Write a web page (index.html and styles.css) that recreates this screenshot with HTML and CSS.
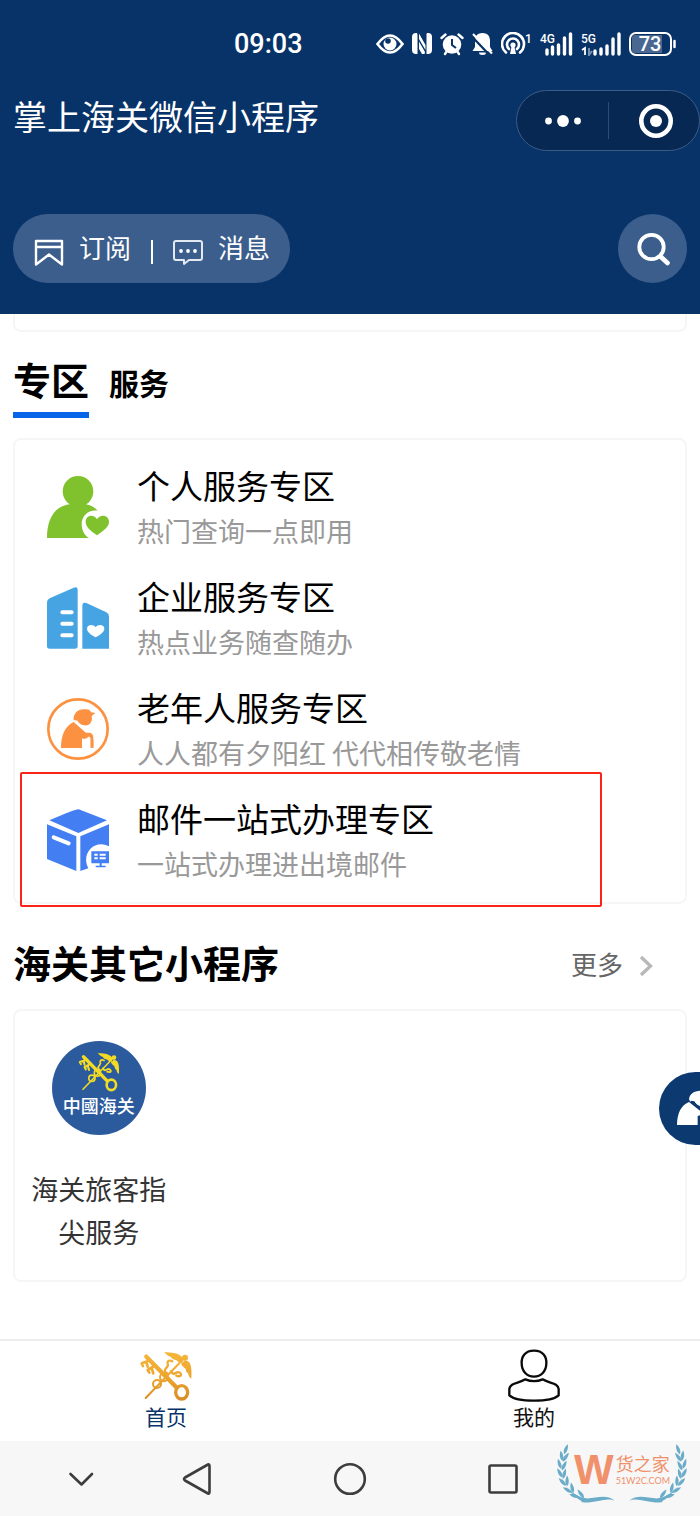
FILE: index.html
```html
<!DOCTYPE html>
<html lang="zh-CN">
<head>
<meta charset="utf-8">
<meta name="viewport" content="width=device-width, initial-scale=1">
<title>掌上海关微信小程序</title>
<link rel="stylesheet" href="styles.css">
</head>
<body>
<svg class="defs" aria-hidden="true">
  <defs>
    <linearGradient id="gold" x1="0" y1="0" x2="0" y2="160" gradientUnits="userSpaceOnUse">
      <stop offset="0" stop-color="#f6b73c"/><stop offset=".5" stop-color="#eea62e"/><stop offset="1" stop-color="#d68a24"/>
    </linearGradient>
    <symbol id="keys" viewBox="0 0 162 160">
      <g fill="none" stroke-linecap="round" stroke-linejoin="round">
        <path stroke-width="6" d="M20 146L136 26"/>
        <circle stroke-width="6" cx="54" cy="104" r="12"/>
        <circle stroke-width="6" cx="75" cy="84" r="12"/>
        <path stroke-width="7" d="M84 72C66 60 92 54 86 44C84 34 92 32 100 36M96 66C104 84 114 62 122 70C130 76 126 84 112 79"/>
        <path stroke-width="13" d="M22 22L112 114"/>
        <ellipse stroke-width="10" cx="128" cy="129" rx="18" ry="20"/>
        <path stroke-width="8" d="M30 34L8 42l4 8M22 38l4 14M46 50L26 62l5 8M38 56l5 16"/>
      </g>
      <circle class="solid" cx="138" cy="25" r="9"/>
      <path class="solid" d="M130 40C120 40 114 36 112 32C104 32 98 28 96 23C88 20 80 14 76 7C95 12 116 6 132 26ZM136 34C152 32 160 46 157 88C152 84 148 79 148 73C142 68 140 64 140 58C134 54 130 50 126 44Z"/>
    </symbol>
    <path id="leaf" d="M0 0C-8 -8 -8 -20 -2 -32C5 -20 6 -8 0 0Z"/>
    <g id="branch">
      <path d="M306 440C312 470 345 500 380 505C410 506 440 490 466 512C440 500 415 520 366 517C376 512 330 505 306 440Z"/>
      <use href="#leaf" transform="translate(314 372) rotate(24)"/>
      <use href="#leaf" transform="translate(309 392) rotate(-6)"/>
      <use href="#leaf" transform="translate(310 394) rotate(38)"/>
      <use href="#leaf" transform="translate(305 416) rotate(-14)"/>
      <use href="#leaf" transform="translate(307 420) rotate(30)"/>
      <use href="#leaf" transform="translate(309 442) rotate(-26)"/>
      <use href="#leaf" transform="translate(311 446) rotate(18)"/>
      <use href="#leaf" transform="translate(320 467) rotate(-40)"/>
      <use href="#leaf" transform="translate(323 468) rotate(4)"/>
      <use href="#leaf" transform="translate(338 488) rotate(-56)"/>
      <use href="#leaf" transform="translate(342 488) rotate(-10)"/>
      <use href="#leaf" transform="translate(360 502) rotate(-70)"/>
      <use href="#leaf" transform="translate(374 504) rotate(-34)"/>
    </g>
  </defs>
</svg>

<header class="header">
  <div class="status">
    <span class="status__time">09:03</span>
    <div class="status__icons">
      <svg width="28" height="24" viewBox="0 0 28 24"><path d="M1.500 12Q14-5 26.500 12Q14 29 1.500 12Z" fill="none" stroke="#fff" stroke-width="2.600"/><circle cx="14" cy="12" r="6.500" fill="#fff"/><circle cx="12" cy="9" r="2.800" fill="#083368"/></svg>
      <svg width="20" height="24" viewBox="0 0 20 24"><path d="M5 1L4 1Q0 1 0 5v13q0 4 4 4h1.500V3ZM7 1.500L13.500 13V18L7 7ZM7 9.500L13 20L12.500 22H10L7 17ZM15 1h1q4 0 4 4v13q0 4-4 4h-1.500V2Z" fill="#fff"/></svg>
      <svg width="24" height="24" viewBox="0 0 24 24"><circle cx="12" cy="12.500" r="9.300" fill="#fff"/><path d="M12 7v6l4 3" fill="none" stroke="#083368" stroke-width="2"/><path d="M1.500 6l4-3.500M22.500 6l-4-3.500M5 22l2-3M19 22l-2-3" stroke="#fff" stroke-width="2.400" stroke-linecap="round"/></svg>
      <svg width="21" height="24" viewBox="0 0 21 24"><path d="M10.500 1c6 0 7.500 4 7.500 8v6l2.500 4H.5L3 15V9c0-4 1.500-8 7.500-8ZM7 20.500h7a3.500 2.500 0 0 1-7 0Z" fill="#fff"/><path d="M-.5 4L18 23.500" stroke="#083368" stroke-width="2.200"/><path d="M1 2L20 21.500" stroke="#fff" stroke-width="2.200"/></svg>
      <svg width="31" height="24" viewBox="0 0 31 24"><g fill="none" stroke="#fff" stroke-width="2.600" stroke-linecap="round"><path d="M5 20.500a11 11 0 1 1 14 0"/><path d="M8 17a6 6 0 1 1 8 0"/></g><circle cx="12" cy="13" r="2.600" fill="#fff"/><path d="M10.500 15h3l1.500 7H9Z" fill="#fff"/><text class="status__tiny" x="24" y="11">1</text></svg>
      <svg width="33" height="24" viewBox="0 0 33 24"><path d="M7 22v-4M12.500 22v-7M18.500 22v-9M24.500 22V6M30.500 22V2" stroke="#fff" stroke-width="3.400" stroke-linecap="round"/><text class="status__tiny" x="0" y="11">4G</text></svg>
      <svg width="40" height="24" viewBox="0 0 40 24"><path d="M14 22v-3M20 22v-5M26 22v-8M32 22V7M38 22V2" stroke="#fff" stroke-width="3.400" stroke-linecap="round"/><path d="M1 18l3-2v7" fill="none" stroke="#fff" stroke-width="1.800"/><path d="M8 16v7l3-4" fill="none" stroke="#7790b2" stroke-width="2"/><text class="status__tiny" x="0" y="11">5G</text></svg>
      <svg width="47" height="24" viewBox="0 0 47 24"><rect x="1" y="1" width="41" height="22" rx="6" fill="#083368" stroke="#fff" stroke-width="2"/><path d="M6 3h27v18H6a3 3 0 0 1-3-3V6a3 3 0 0 1 3-3Z" fill="#4a6791"/><path d="M45.500 9v6" stroke="#fff" stroke-width="2.500" stroke-linecap="round"/><text class="status__level" x="21" y="19">73</text></svg>
    </div>
  </div>
  <div class="titlebar">
    <h1 class="titlebar__title">掌上海关微信小程序</h1>
    <div class="capsule">
      <button class="capsule__btn" aria-label="更多选项"><svg width="38" height="14" viewBox="0 0 38 14"><g fill="#fff"><circle cx="4.500" cy="7" r="3.400"/><circle cx="19" cy="7" r="5.900"/><circle cx="33.500" cy="7" r="3.400"/></g></svg></button>
      <button class="capsule__btn capsule__btn--close" aria-label="关闭"><svg width="36" height="36" viewBox="0 0 36 36"><circle cx="18" cy="18" r="14.700" fill="none" stroke="#fff" stroke-width="4.600"/><circle cx="18" cy="18" r="6" fill="#fff"/></svg></button>
    </div>
  </div>
  <div class="tools">
    <div class="pill">
      <button class="pill__btn"><svg width="30" height="28" viewBox="0 0 30 28"><path d="M2 2h26v23.500L15 15.500L2 25.500ZM2 8h26" fill="none" stroke="#fff" stroke-width="2.400" stroke-linejoin="round"/></svg><span>订阅</span></button>
      <span class="pill__line"></span>
      <button class="pill__btn"><svg width="30" height="28" viewBox="0 0 30 28"><path d="M3 2h24q2 0 2 2v15q0 2-2 2H16l-5 4v-4H3q-2 0-2-2V4q0-2 2-2Z" fill="none" stroke="#e3e9f1" stroke-width="2" stroke-linejoin="round"/><g fill="#fff"><circle cx="8" cy="12" r="1.900"/><circle cx="15" cy="12" r="1.900"/><circle cx="22" cy="12" r="1.900"/></g></svg><span>消息</span></button>
    </div>
    <button class="search" aria-label="搜索"><svg width="36" height="36" viewBox="0 0 36 36"><circle cx="16.500" cy="16" r="12.200" fill="none" stroke="#fff" stroke-width="3.800"/><path d="M25.500 25.500l7 6.500" stroke="#fff" stroke-width="4.600" stroke-linecap="round"/></svg></button>
  </div>
</header>

<main class="main">
  <div class="card card--tail"></div>

  <div class="tabs">
    <button class="tabs__item tabs__item--on">专区</button>
    <button class="tabs__item">服务</button>
  </div>

  <section class="card zones">
    <a class="zone" href="#personal">
      <svg class="zone__icon" viewBox="0 0 186 186"><g fill="#7fc22d"><circle cx="93" cy="46" r="46"/><path d="M0 186C0 130 22 88 72 84h42c18 4 28 9 38 20c-28-4-48 16-48 40c0 18 8 34 22 42Z"/><path d="M150 178C130 164 116 152 116 138c0-22 26-24 34-8c8-16 36-14 36 8c0 14-16 26-36 40Z"/></g></svg>
      <span class="zone__text"><span class="zone__name">个人服务专区</span><span class="zone__desc">热门查询一点即用</span></span>
    </a>
    <a class="zone" href="#company">
      <svg class="zone__icon" viewBox="0 0 186 186"><path fill="#47a4e3" d="M0 46Q0 38 8 34L80 2q12-5 12 7v168q0 8-8 8H8q-8 0-8-8ZM106 56q0-12 12-8l60 28q8 4 8 12v97h-80Z"/><path d="M46 76h28M46 110h28M46 145h28" stroke="#fff" stroke-width="12" stroke-linecap="round"/><path d="M146 151c-16-9-26-17-26-26c0-14 20-14 26-4c6-10 26-10 26 4c0 9-10 17-26 26Z" fill="#fff"/></svg>
      <span class="zone__text"><span class="zone__name">企业服务专区</span><span class="zone__desc">热点业务随查随办</span></span>
    </a>
    <a class="zone" href="#senior">
      <svg class="zone__icon" viewBox="0 0 186 186"><circle cx="93" cy="93" r="89" fill="none" stroke="#fc9141" stroke-width="8"/><g fill="#fc9141"><path d="M42 150C42 112 54 84 80 72L118 106C134 104 142 118 139 149H131V122Q130 114 122 116V119L109 124V117L105 117V150Z"/><path d="M100 104H128Q139 106 139 120V149H131V122Q130 114 122 116L106 122Z"/><path d="M80 66C78 48 92 34 110 34C124 32 130 36 132 43L145 45L134 54C138 72 126 85 112 82C100 80 94 74 92 68Z"/></g></svg>
      <span class="zone__text"><span class="zone__name">老年人服务专区</span><span class="zone__desc">人人都有夕阳红 代代相传敬老情</span></span>
    </a>
    <a class="zone" href="#mail">
      <svg class="zone__icon" viewBox="0 0 186 186"><g fill="#437ff2"><path d="M7 34Q90 -2 95 1L180 34L94 72ZM0 46L88 82V186L0 150ZM100 82L186 46V112C150 92 112 122 118 160Q119 170 124 178L100 186Z"/><path d="M133 127h53v36h-22v7h12v5h-30v-5h12v-7h-25Z"/></g><path d="M20 85L65 103" stroke="#fff" stroke-width="12" stroke-linecap="round"/><path d="M142 137h10M158 137h18M142 148h10M158 148h18" stroke="#fff" stroke-width="6"/></svg>
      <span class="zone__text"><span class="zone__name">邮件一站式办理专区</span><span class="zone__desc">一站式办理进出境邮件</span></span>
      <span class="zone__mark"></span>
    </a>
  </section>

  <div class="heading">
    <h2 class="heading__title">海关其它小程序</h2>
    <a class="heading__more" href="#more">更多<svg width="14" height="22" viewBox="0 0 14 22"><path d="M2 2l9.500 9L2 20" fill="none" stroke="#b9b9b9" stroke-width="3.400"/></svg></a>
  </div>

  <section class="card apps">
    <a class="app" href="#guide">
      <span class="app__logo"><svg class="app__keys" viewBox="0 0 162 160"><use href="#keys"/></svg><span class="app__brand">中國海关</span></span>
      <span class="app__name">海关旅客指尖服务</span>
    </a>
  </section>

  <button class="care" aria-label="长者模式"><svg width="23" height="38" viewBox="0 0 69 114"><g fill="#fff"><path d="M0 105C0 70 12 46 36 36L69 62V76L62 78V105Z"/><path d="M36 28C38 10 52 3 69 2V48C60 46 56 40 52 34L42 32L40 36Z"/></g></svg></button>
</main>

<nav class="tabbar">
  <a class="tabbar__item tabbar__item--on" href="#home"><svg class="tabbar__keys" viewBox="0 0 162 160"><use href="#keys"/></svg><span>首页</span></a>
  <a class="tabbar__item" href="#me"><svg width="54" height="54" viewBox="0 0 162 162"><g fill="none" stroke="#0a0a0a" stroke-width="7" stroke-linejoin="round"><path d="M81 5C108 5 119 23 118 43C118 67 102 83 81 83S44 67 44 43C43 23 54 5 81 5Z"/><path d="M55 91C34 104 10 100 7 120V139C30 160 132 160 155 139V120C152 100 128 104 107 91Q81 102 55 91Z"/></g></svg><span>我的</span></a>
</nav>

<footer class="sysnav">
  <button class="sysnav__btn" aria-label="收起"><svg width="36" height="36" viewBox="0 0 36 36"><path d="M7.500 13L18.500 23.500L29 13"/></svg></button>
  <button class="sysnav__btn" aria-label="返回"><svg width="36" height="36" viewBox="0 0 36 36"><path d="M29 3.500q1.500-.5 1.500 1.500v26q0 2-1.500 1.500L6 19.500q-2-1.500 0-3Z"/></svg></button>
  <button class="sysnav__btn" aria-label="主屏幕"><svg width="36" height="36" viewBox="0 0 36 36"><circle cx="18" cy="18" r="14.800"/></svg></button>
  <button class="sysnav__btn" aria-label="最近任务"><svg width="36" height="36" viewBox="0 0 36 36"><rect x="4.500" y="4.500" width="27" height="27" rx="1.500"/></svg></button>
  <div class="stamp">
    <svg class="stamp__laurel" viewBox="290 338 397 184" fill="#6bacc9"><use href="#branch"/><use href="#branch" transform="translate(977 0) scale(-1 1)"/></svg>
    <span class="stamp__w">W</span>
    <span class="stamp__text"><span class="stamp__name">货之家</span><span class="stamp__site">51W2C.COM</span></span>
  </div>
</footer>
</body>
</html>
```
FILE: styles.css
```css
* { box-sizing: border-box; }

body {
  margin: 0;
  min-height: 100vh;
  display: flex;
  flex-direction: column;
  background: #fff;
  color: #000;
  font-family: "Noto Sans CJK SC", sans-serif;
}

button {
  margin: 0;
  padding: 0;
  border: 0;
  background: none;
  color: inherit;
  font: inherit;
}

a { color: inherit; text-decoration: none; }
svg { display: block; flex: none; }
.defs { position: absolute; width: 0; height: 0; }

/* Header */
.header { background: #083368; color: #fff; padding-bottom: 31px; }

.status {
  display: flex;
  align-items: center;
  justify-content: space-between;
  height: 90px;
  padding: 0 24px 3px 234px;
}
.status__time { font: 500 27px/36px Roboto, sans-serif; }
.status__icons { display: flex; align-items: center; gap: 8px; }
.status__tiny { font: 500 12px Roboto, sans-serif; fill: #fff; }
.status__level { font: 500 20px Roboto, sans-serif; fill: #fff; text-anchor: middle; }

.titlebar {
  display: flex;
  justify-content: space-between;
  padding-left: 13px;
}
.titlebar__title { margin: 0; font-size: 34px; font-weight: 400; line-height: 52px; }

.capsule {
  display: grid;
  grid-template-columns: 1fr 1fr;
  width: 184px;
  height: 61px;
  border: 1px solid #3d5c87;
  border-radius: 31px;
  background: #062853;
}
.capsule__btn { display: flex; align-items: center; justify-content: center; }
.capsule__btn--close { position: relative; padding-left: 4px; }
.capsule__btn--close::before {
  content: "";
  position: absolute;
  left: 0;
  top: 11px;
  bottom: 11px;
  border-left: 1px solid #304c75;
}

.tools {
  display: flex;
  justify-content: space-between;
  margin-top: 63px;
  padding: 0 13px;
}
.pill {
  display: flex;
  align-items: center;
  gap: 20px;
  height: 69px;
  padding: 0 20px 0 21px;
  border-radius: 35px;
  background: #3c5e8c;
}
.pill__btn { display: flex; align-items: center; gap: 15px; font-size: 26px; line-height: 40px; }
.pill__btn svg { margin-top: 8px; }
.pill__btn span { margin-bottom: 4px; }
.pill__line { width: 2px; height: 24px; margin-top: 7px; background: #fff; }
.search {
  display: flex;
  align-items: center;
  justify-content: center;
  width: 69px;
  height: 69px;
  border-radius: 50%;
  background: #3c5e8c;
}

/* Content */
.main { position: relative; flex: 1; padding: 0 13px 56px; }

.card { border: 2px solid #f6f6f6; border-radius: 8px; background: #fff; }
.card--tail { height: 18px; border-top: 0; border-radius: 0 0 8px 8px; }

.tabs { display: flex; align-items: flex-start; gap: 20px; padding: 20px 0; }
.tabs__item { padding-top: 4px; font-size: 30px; font-weight: 700; line-height: 52px; }
.tabs__item--on {
  padding: 1px 0 7px;
  border-bottom: 6px solid #0864e8;
  font-size: 38px;
}

.zones { display: grid; gap: 20px; padding: 22px 32px 16px; }
.zone { position: relative; display: flex; align-items: flex-start; gap: 28px; }
.zone__icon { width: 62px; height: 62px; margin-top: 14px; }
.zone__text { display: grid; }
.zone__name { font-size: 33px; line-height: 46px; }
.zone__desc { color: #999; font-size: 27px; line-height: 45px; }
.zone__mark {
  position: absolute;
  inset: -23px 51px -21px -27px;
  border: 2px solid #fb2418;
  border-radius: 2px;
}

.heading {
  display: flex;
  align-items: center;
  justify-content: space-between;
  padding: 29px 34px 18px 0;
}
.heading__title { margin: 0; font-size: 38px; line-height: 58px; }
.heading__more {
  display: flex;
  align-items: center;
  gap: 16px;
  padding-top: 4px;
  color: #666;
  font-size: 26px;
  line-height: 40px;
}
.heading__more svg { margin-top: 4px; }

.apps {
  display: grid;
  grid-template-columns: repeat(4, 1fr);
  padding: 30px 0 27px;
}
.app { display: grid; justify-items: center; gap: 32px; padding: 0 8px; }
.app__logo {
  display: flex;
  flex-direction: column;
  align-items: center;
  width: 94px;
  height: 94px;
  padding-top: 10px;
  border-radius: 50%;
  background: #2b5b9d;
}
.app__keys { width: 44px; height: 42px; stroke: #f3da25; --solid: #f3da25; }
.solid { fill: var(--solid); stroke: none; }
.app__brand { color: #fff; font-size: 18px; font-weight: 500; line-height: 24px; }
.app__name { color: #333; font-size: 27px; line-height: 43px; text-align: center; }

.care {
  position: absolute;
  right: 0;
  bottom: 194px;
  display: flex;
  align-items: center;
  justify-content: flex-end;
  width: 41px;
  height: 73px;
  border-radius: 37px 0 0 37px;
  background: #0b3970;
}

/* Bottom bars */
.tabbar {
  display: flex;
  justify-content: space-between;
  padding: 8px 19% 12px;
  border-top: 2px solid #ededed;
}
.tabbar__item {
  display: grid;
  justify-items: center;
  width: 66px;
  color: #111;
  font-size: 21px;
  line-height: 26px;
}
.tabbar__item--on { color: #083368; }
.tabbar__keys { width: 54px; height: 54px; stroke: url(#gold); --solid: url(#gold); }

.sysnav {
  position: relative;
  display: grid;
  grid-template-columns: 162fr 70fr 236fr 70fr 162fr;
  height: 75px;
  background: #f7f7f7;
}
.sysnav__btn { display: flex; align-items: center; justify-content: center; }
.sysnav__btn svg {
  fill: none;
  stroke: #3d3d3d;
  stroke-width: 2.6;
  stroke-linecap: round;
  stroke-linejoin: round;
}

.stamp {
  position: absolute;
  top: 2px;
  right: 12px;
  display: flex;
  gap: 2px;
  width: 132px;
  height: 61px;
  padding: 7px 0 0 18px;
  color: #f0916b;
}
.stamp__laurel { position: absolute; left: 0; top: 0; width: 132px; height: 61px; }
.stamp__w { font: 700 42px/40px "Liberation Sans", sans-serif; }
.stamp__text { display: grid; align-content: start; }
.stamp__name { font-size: 18px; line-height: 26px; }
.stamp__site { font: 400 9px/10px Lato, sans-serif; }
```
